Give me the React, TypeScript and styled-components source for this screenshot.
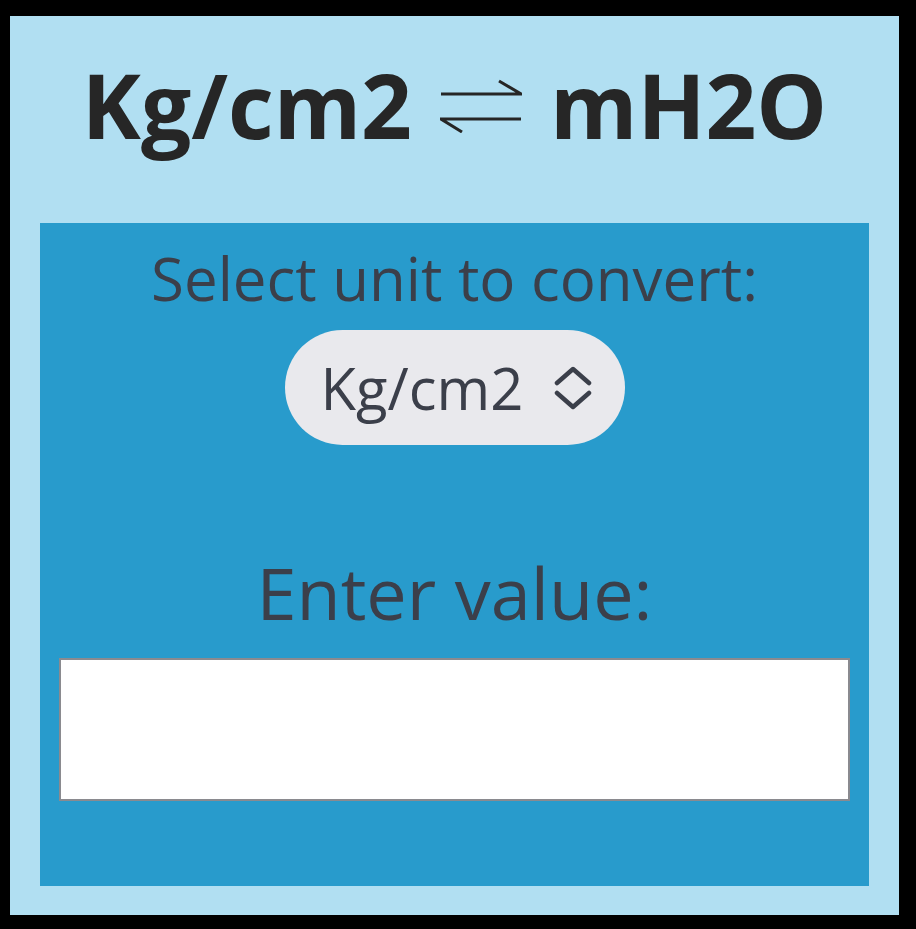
import React, { useState } from "react";
import styled, { createGlobalStyle } from "styled-components";

const GlobalStyle = createGlobalStyle`
  html, body {
    margin: 0;
    padding: 0;
    background: #000;
  }
  body {
    font-family: "Open Sans", "Liberation Sans", sans-serif;
  }
  * { box-sizing: border-box; }
`;

const Frame = styled.div`
  width: 916px;
  height: 929px;
  background: #000;
  padding: 16px 17px 14px 10px;
  display: flex;
`;

const Card = styled.div`
  flex: 1;
  background: #b1dff2;
  padding: 0 30px 29px;
  display: flex;
  flex-direction: column;
`;

const Title = styled.h1`
  margin: 44px 0 74px;
  height: 89px;
  font-size: 89px;
  line-height: 1;
  font-weight: 700;
  color: #262626;
  display: flex;
  align-items: center;
  justify-content: center;
  gap: 28px;
  white-space: nowrap;
`;

const Panel = styled.section`
  flex: 1;
  background: #289bcc;
  padding: 25px 19px 85px;
  display: flex;
  flex-direction: column;
  align-items: center;
`;

const Label = styled.label<{ $size: number; $gap: number }>`
  display: block;
  margin-top: ${(p) => p.$gap}px;
  font-size: ${(p) => p.$size}px;
  line-height: 1;
  height: ${(p) => p.$size}px;
  color: #3b3f4a;
  white-space: nowrap;
`;

const Pill = styled.div`
  margin-top: 22px;
  height: 115px;
  width: 340px;
  border-radius: 58px;
  background: #e9e9ed;
  display: flex;
  align-items: center;
  padding: 0 33px 0 36px;
  gap: 20px;
`;

const Select = styled.select`
  appearance: none;
  -webkit-appearance: none;
  border: none;
  background: transparent;
  font-family: "Open Sans", "Liberation Sans", sans-serif;
  font-size: 58px;
  color: #3b3f4a;
  padding: 0;
  margin: 0;
  flex: 1;
  min-width: 0;
  outline: none;
`;

const ValueInput = styled.input`
  margin-top: 30px;
  width: 100%;
  height: 143px;
  background: #fff;
  border: 2px solid #8a8a8f;
  font-size: 48px;
  font-family: "Open Sans", "Liberation Sans", sans-serif;
  padding: 0 16px;
  outline: none;
`;

const SwapArrows = () => (
  <svg width="82" height="56" viewBox="0 0 82 56" aria-label="⇌" role="img">
    <g fill="none" stroke="#262626" strokeWidth="3" strokeLinecap="butt">
      <path d="M1 17 H81 L59 4" />
      <path d="M81 42 H1 L22 55" />
    </g>
  </svg>
);

const Chevrons = () => (
  <svg width="38" height="44" viewBox="0 0 38 44" aria-hidden="true">
    <g fill="none" stroke="#3b3f4a" strokeWidth="4.5" strokeLinecap="round" strokeLinejoin="round">
      <path d="M3 17 L19 3 L35 17" />
      <path d="M3 27 L19 41 L35 27" />
    </g>
  </svg>
);

export default function App() {
  const [unit, setUnit] = useState("kgcm2");
  const [value, setValue] = useState("");
  return (
    <>
      <GlobalStyle />
      <Frame>
        <Card>
          <Title>
            <span>Kg/cm2</span>
            <SwapArrows />
            <span>mH2O</span>
          </Title>
          <Panel>
            <Label $size={60} $gap={0} htmlFor="unit">
              Select unit to convert:
            </Label>
            <Pill>
              <Select id="unit" value={unit} onChange={(e) => setUnit(e.target.value)}>
                <option value="kgcm2">Kg/cm2</option>
                <option value="mh2o">mH2O</option>
              </Select>
              <Chevrons />
            </Pill>
            <Label $size={72} $gap={111} htmlFor="value">
              Enter value:
            </Label>
            <ValueInput id="value" type="text" value={value} onChange={(e) => setValue(e.target.value)} />
          </Panel>
        </Card>
      </Frame>
    </>
  );
}
